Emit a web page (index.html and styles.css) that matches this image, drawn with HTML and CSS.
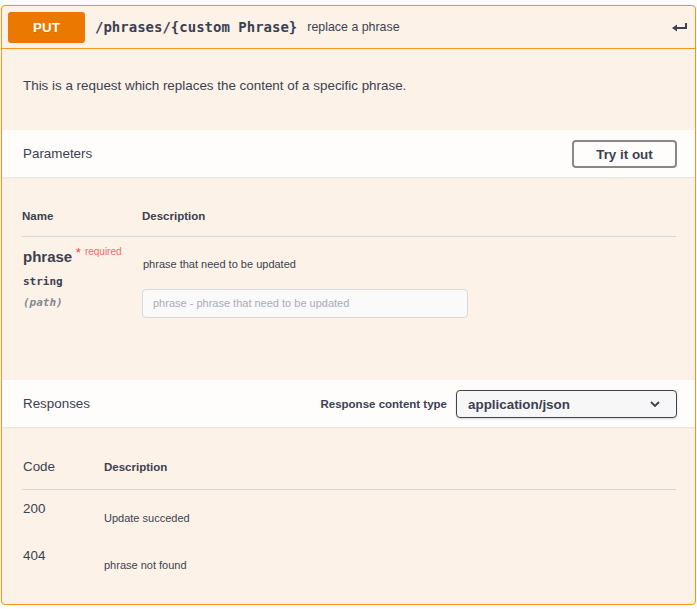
FILE: index.html
```html
<!DOCTYPE html>
<html>
<head>
<meta charset="utf-8">
<link rel="stylesheet" href="styles.css">
</head>
<body>
<div class="opblock">
  <div class="summary">
    <span class="method">PUT</span>
    <span class="path">/phrases/{custom Phrase}</span>
    <span class="summary-desc">replace a phrase</span>
    <svg class="arrow" width="17" height="11" viewBox="0 0 17 11"><rect x="13" y="1" width="2" height="6" fill="#3b4151"/><rect x="4" y="5" width="11" height="2" fill="#3b4151"/><polygon points="0,6 5,2.5 5,9.5" fill="#3b4151"/></svg>
  </div>
  <div class="desc"><p>This is a request which replaces the content of a specific phrase.</p></div>
  <div class="section-header">
    <h4>Parameters</h4>
    <button class="try">Try it out</button>
  </div>
  <div class="params">
    <table class="ptable">
      <thead><tr><th class="col-name">Name</th><th>Description</th></tr></thead>
      <tbody>
        <tr>
          <td class="col-name">
            <div class="pname">phrase<span class="star">&nbsp;*</span><span class="req">required</span></div>
            <div class="ptype">string</div>
            <div class="pin">(path)</div>
          </td>
          <td class="pdesc">
            <p>phrase that need to be updated</p>
            <div class="input">phrase - phrase that need to be updated</div>
          </td>
        </tr>
      </tbody>
    </table>
  </div>
  <div class="section-header resp-header">
    <h4>Responses</h4>
    <div class="ctype">
      <span class="ctype-label">Response content type</span>
      <div class="select">application/json<svg class="chev" width="10" height="6" viewBox="0 0 10 6"><polyline points="1,1 5,5 9,1" fill="none" stroke="#3b4151" stroke-width="1.8"/></svg></div>
    </div>
  </div>
  <div class="responses">
    <table class="rtable">
      <thead><tr><th class="col-code">Code</th><th class="th-desc">Description</th></tr></thead>
      <tbody>
        <tr><td class="col-code code">200</td><td class="rdesc">Update succeded</td></tr>
        <tr><td class="col-code code">404</td><td class="rdesc">phrase not found</td></tr>
      </tbody>
    </table>
  </div>
</div>
</body>
</html>
```
FILE: styles.css
```css
html, body {
  margin: 0;
  padding: 0;
  background: #ffffff;
}
body {
  font-family: "Liberation Sans", Arial, sans-serif;
  color: #3b4151;
  padding-top: 5px;
}
.opblock {
  margin: 0 1px 0 1px;
  border: 1px solid #f9951f;
  border-radius: 4px;
  background: #fdf2e8;
  height: 600px;
  box-sizing: border-box;
  box-shadow: 0 0 2px rgba(0,0,0,0.15);
}
.summary {
  display: flex;
  align-items: center;
  height: 42px;
  padding: 0 6px;
  border-bottom: 1px solid #f9951f;
  box-sizing: content-box;
}
.method {
  display: inline-block;
  width: 77px;
  height: 31px;
  line-height: 31px;
  background: #eb7800;
  color: #fff;
  font-weight: bold;
  font-size: 13.4px;
  text-align: center;
  border-radius: 3px;
  text-shadow: 0 1px 0 rgba(0,0,0,0.1);
}
.path {
  margin-left: 10px;
  font-family: "DejaVu Sans Mono", monospace;
  font-weight: bold;
  font-size: 14px;
  color: #3b4151;
}
.summary-desc {
  margin-left: 10px;
  font-size: 12.4px;
  color: #3b4151;
  flex: 1;
}
.arrow {
  margin-top: 1px;
}
.desc {
  height: 81px;
  box-sizing: border-box;
  padding: 27px 20px 0 21px;
}
.desc p {
  margin: 0;
  font-size: 13.4px;
  line-height: 20px;
}
.section-header {
  display: flex;
  align-items: center;
  justify-content: space-between;
  height: 47px;
  box-sizing: border-box;
  padding: 0 18px 0 21px;
  background: rgba(255,255,255,0.85);
  box-shadow: 0 1px 2px rgba(0,0,0,0.08);
}
.section-header h4 {
  margin: 0;
  font-size: 13.4px;
  font-weight: normal;
  color: #3b4151;
}
.try {
  width: 105px;
  height: 28px;
  margin-top: 1px;
  border: 2px solid #888;
  border-radius: 4px;
  background: transparent;
  font-family: "Liberation Sans", Arial, sans-serif;
  font-weight: bold;
  font-size: 13.4px;
  color: #3b4151;
  padding: 0;
}
.params {
  height: 203px;
  box-sizing: border-box;
  padding: 19px 19px 0 20px;
}
table {
  width: 100%;
  border-collapse: collapse;
}
th {
  text-align: left;
  font-size: 11.5px;
  font-weight: bold;
  line-height: 16px;
  padding: 12px 0;
  border-bottom: 1px solid #d8d6d3;
  color: #3b4151;
}
td {
  vertical-align: top;
  padding: 0;
}
.ptable .col-name {
  width: 120px;
}
.ptable td.col-name {
  padding-top: 10px;
}
.pname {
  font-size: 15px;
  font-weight: bold;
  line-height: 20px;
  padding-left: 1px;
}
.star {
  color: #f93e3e;
  font-size: 13px;
  position: relative;
  top: -5px;
  font-weight: normal;
}
.req {
  font-size: 10px;
  font-weight: normal;
  color: #f86a6a;
  position: relative;
  top: -7px;
  margin-left: 4px;
}
.ptype {
  font-family: "DejaVu Sans Mono", monospace;
  font-size: 11px;
  font-weight: bold;
  line-height: 16px;
  padding-top: 5px;
  padding-left: 1px;
}
.pin {
  font-family: "DejaVu Sans Mono", monospace;
  font-size: 11px;
  font-style: italic;
  font-weight: bold;
  color: #858990;
  line-height: 16px;
  padding-top: 5px;
  padding-left: 1px;
}
.pdesc {
  padding-top: 20px !important;
}
.pdesc p {
  margin: 0;
  font-size: 11px;
  line-height: 15px;
  padding-left: 1px;
}
.input {
  margin-top: 17px;
  width: 326px;
  height: 29px;
  box-sizing: border-box;
  border: 1px solid #d9d9d9;
  border-radius: 4px;
  background: #fafafa;
  font-size: 11px;
  line-height: 27px;
  padding-left: 10px;
  color: #a9adb6;
}
.ctype {
  display: flex;
  align-items: center;
  margin-top: 1px;
}
.ctype-label {
  font-size: 11.5px;
  font-weight: bold;
  margin-right: 9px;
}
.select {
  display: flex;
  align-items: center;
  justify-content: space-between;
  width: 221px;
  height: 28px;
  box-sizing: border-box;
  border: 1px solid #41444e;
  border-radius: 4px;
  background: #f7f7f7;
  font-size: 13.4px;
  font-weight: bold;
  padding: 0 16px 0 11px;
  box-shadow: 0 1px 2px rgba(0,0,0,0.15);
}
.responses {
  height: 176px;
  box-sizing: border-box;
  padding: 22px 19px 0 20px;
}
.rtable th {
  padding: 10px 0 14px;
}
.rtable th.col-code {
  font-size: 13.4px;
  font-weight: normal;
  padding-left: 1px;
}
.rtable .col-code {
  width: 81px;
}
.code {
  font-size: 13.4px;
  line-height: 17px;
  padding-top: 10px !important;
  padding-left: 1px !important;
}
.rdesc {
  font-size: 11px;
  line-height: 15px;
  padding-top: 21px !important;
  padding-bottom: 11px !important;
}
```
